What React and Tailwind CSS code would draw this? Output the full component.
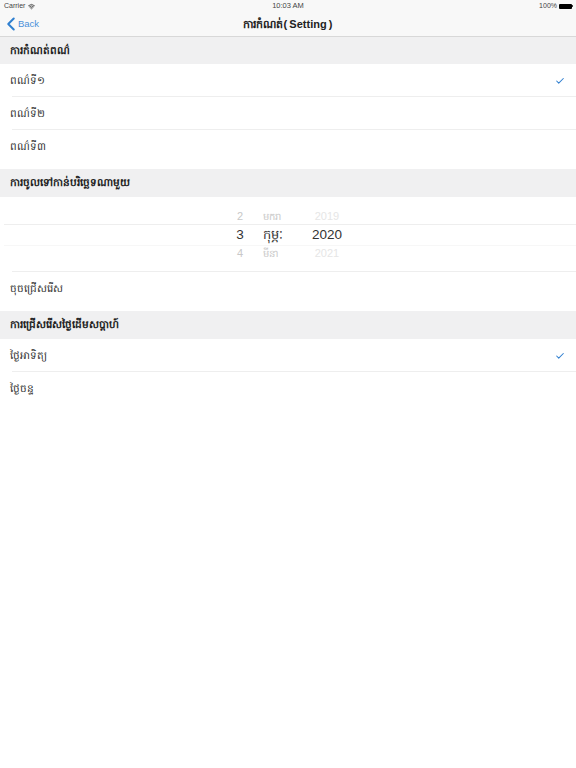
import { Check, ChevronLeft, Wifi } from 'lucide-react';

const SANS = 'font-["Liberation_Sans",sans-serif]';

const SectionHeader = ({ children, short }) => (
  <div
    className={
      short
        ? 'flex h-[27px] items-center bg-[#f0f0f1] pl-[10px] text-[10.5px] font-bold text-[#222]'
        : 'flex h-[28px] items-center bg-[#f0f0f1] pl-[10px] text-[10.5px] font-bold text-[#222]'
    }
  >
    {children}
  </div>
);

const Row = ({ label, checked, divider }) => (
  <div className="relative flex h-[33px] items-center justify-between bg-white pl-[10px] pr-[11px] text-[10.5px] text-[#333]">
    <span>{label}</span>
    {checked && <Check size={10} strokeWidth={2.5} className="text-[#2f7fd0]" />}
    {divider && <div className="absolute bottom-0 left-[12px] right-0 h-px bg-[#eeeeee]" />}
  </div>
);

const PickerLine = ({ day, month, year, selected }) => (
  <div
    className={
      selected
        ? 'grid h-[20px] grid-cols-[28px_50px_46px] items-center text-[13.5px] text-[#333]'
        : 'grid h-[17px] grid-cols-[28px_50px_46px] items-center text-[11px] text-[#c8c8c8]'
    }
  >
    <span className="text-center">{day}</span>
    <span className={selected ? 'pl-[9px] text-[13px]' : 'pl-[9px] text-[10px]'}>{month}</span>
    <span className={selected ? 'text-center' : 'text-center text-[#e6e6e6]'}>{year}</span>
  </div>
);

export default function App() {
  return (
    <div className={`flex min-h-[768px] w-[576px] flex-col bg-white ${SANS}`}>
      <div className="border-b border-[#d8d8d8] bg-[#f8f8f8]">
        <div className="relative flex h-[12px] items-center justify-between pl-[4px] pr-[3px] text-[7px] text-[#444]">
          <span className="flex items-center gap-[3px]">
            Carrier
            <Wifi size={7} strokeWidth={3} />
          </span>
          <span className="absolute left-0 right-0 text-center text-[7.5px]">10:03 AM</span>
          <span className="flex items-center gap-[2px]">
            100%
            <span className="h-[5px] w-[13px] rounded-[1px] bg-black" />
            <span className="-ml-[2px] h-[2px] w-px bg-[#444]" />
          </span>
        </div>
        <div className="relative flex h-[24px] items-center">
          <div className="flex items-center text-[#4a90d9]">
            <ChevronLeft size={22} strokeWidth={2.2} className="-mr-[4px] text-[#2f7fd0]" />
            <span className="text-[9.5px]">Back</span>
          </div>
          <div className="absolute left-0 right-0 text-center text-[11px] font-bold text-[#222]">
            ការកំណត់({'\u2009'}Setting{'\u2009'})
          </div>
        </div>
      </div>

      <SectionHeader short>ការកំណត់ពណ៌</SectionHeader>
      <Row label="ពណ៌ទី១" checked divider />
      <Row label="ពណ៌ទី២" divider />
      <Row label="ពណ៌ទី៣" />
      <div className="h-[6px] bg-white" />

      <SectionHeader>ការចូលទៅកាន់បរិច្ឆេទណាមួយ</SectionHeader>
      <div className="relative flex h-[75px] flex-col items-center justify-center bg-white">
        <div className="absolute left-[4px] right-0 top-[27px] h-px bg-[#eeeeee]" />
        <div className="absolute left-[4px] right-0 top-[48px] h-px bg-[#f7f7f7]" />
        <div>
          <PickerLine day="2" month="មករា" year="2019" />
          <PickerLine day="3" month="កុម្ភៈ" year="2020" selected />
          <PickerLine day="4" month="មីនា" year="2021" />
        </div>
        <div className="absolute bottom-0 left-[12px] right-0 h-px bg-[#eeeeee]" />
      </div>
      <div className="flex h-[33px] items-center bg-white pl-[10px] text-[10.5px] text-[#333]">ចុចជ្រើសរើស</div>
      <div className="h-[6px] bg-white" />

      <SectionHeader>ការជ្រើសរើសថ្ងៃដើមសប្តាហ៍</SectionHeader>
      <Row label="ថ្ងៃអាទិត្យ" checked divider />
      <Row label="ថ្ងៃចន្ទ" />
    </div>
  );
}
